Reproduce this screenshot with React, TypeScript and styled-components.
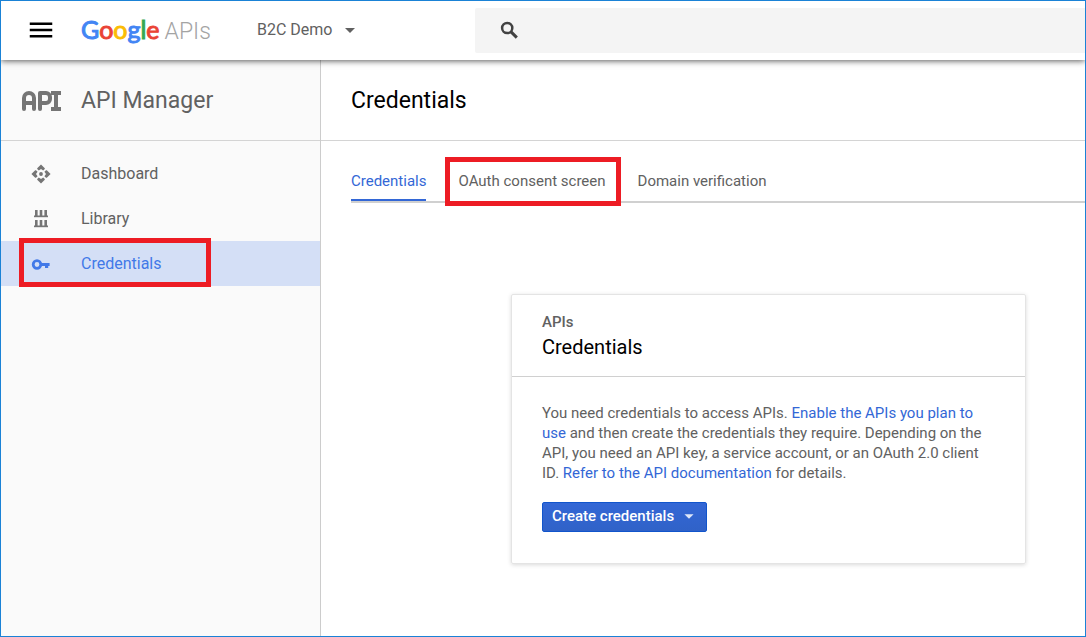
import React from "react";
import styled, { createGlobalStyle } from "styled-components";
import { MdMenu, MdArrowDropDown } from "react-icons/md";
import { TbApi } from "react-icons/tb";

const GlobalStyle = createGlobalStyle`
  *, *::before, *::after { box-sizing: border-box; }
  body { margin: 0; font-family: Roboto, "Liberation Sans", sans-serif; font-size: 15px; line-height: 20px; color: #616161; background: #fff; }
  h1, h2, p, ul { margin: 0; padding: 0; font-weight: 400; }
  ul { list-style: none; }
  a { color: #3367d6; text-decoration: none; }
  button { font: inherit; border: 0; padding: 0; background: none; cursor: pointer; }
  svg { display: block; flex: none; }
`;

const Page = styled.div`
  min-height: 100vh;
  display: flex;
  flex-direction: column;
  border: 1px solid #1a82d6;
`;

const TopBar = styled.header`
  position: relative;
  z-index: 1;
  display: flex;
  align-items: center;
  height: 59px;
  padding: 0 0 2px 25px;
  background: #fff;
  box-shadow: 0 1px 6px rgba(0, 0, 0, 0.65);
  clip-path: inset(0 0 -10px 0);
`;

const MenuButton = styled.button`
  width: 55px;
  color: #000;
`;

const Brand = styled.a`
  display: flex;
  align-items: baseline;
  gap: 5px;
  width: 176px;
  padding-top: 2px;
  line-height: 30px;
`;

const Wordmark = styled.span`
  font-family: Lato, Roboto, sans-serif;
  font-size: 25px;
  -webkit-text-stroke: 1px currentColor;
`;

const Letter = styled.span<{ $color: string }>`
  color: ${(p) => p.$color};
`;

const Suite = styled.span`
  color: #a4a4a4;
  font-size: 23px;
  font-weight: 300;
`;

const ProjectButton = styled.button`
  display: flex;
  align-items: center;
  gap: 6px;
  color: #616161;
  font-size: 16px;
`;

const Search = styled.label`
  flex: 1;
  align-self: flex-start;
  display: flex;
  align-items: center;
  gap: 12px;
  height: 45px;
  margin: 7px 0 0 113px;
  padding-left: 23px;
  color: #424242;
  background: #f4f4f4;
  border-radius: 2px 0 0 2px;
`;

const SearchInput = styled.input`
  flex: 1;
  min-width: 0;
  border: 0;
  outline: 0;
  font: inherit;
  background: transparent;
`;

const Body = styled.div`
  flex: 1;
  display: flex;
`;

const Sidebar = styled.nav`
  width: 320px;
  flex: none;
  background: #fafafa;
  border-right: 1px solid #ccc;
`;

const SectionHead = styled.div`
  display: flex;
  align-items: center;
  gap: 20px;
  height: 81px;
  padding: 1px 20px 0;
  border-bottom: 1px solid #d4d4d4;
  color: #616161;
  font-size: 23px;
  line-height: 32px;
`;

const NavList = styled.ul`
  padding-top: 10px;
`;

const NavItem = styled.li`
  position: relative;
`;

const NavLink = styled.a<{ $active?: boolean }>`
  display: flex;
  align-items: center;
  gap: 30px;
  height: 45px;
  padding-left: 30px;
  font-size: 16px;
  color: ${(p) => (p.$active ? "#4279e8" : "#616161")};
  background: ${(p) => (p.$active ? "#d4dff6" : "transparent")};
  svg { color: ${(p) => (p.$active ? "#4279e8" : "#757575")}; }
`;

const Highlight = styled.span<{ $left: number; $width: string }>`
  position: absolute;
  top: -3px;
  left: ${(p) => p.$left}px;
  width: ${(p) => p.$width};
  height: 49px;
  border: 5px solid #ed1c24;
  pointer-events: none;
`;

const Main = styled.main`
  flex: 1;
  min-width: 0;
`;

const PageHead = styled(SectionHead)`
  padding: 1px 30px 0;
  color: #000;
`;

const PageTitle = styled.h1`
  font-size: 23px;
`;

const Tabs = styled.div`
  display: flex;
  gap: 32px;
  height: 43px;
  margin: 19px 0 0 30px;
  border-bottom: 2px solid #d0d0d0;
`;

const Tab = styled.a<{ $active?: boolean }>`
  position: relative;
  display: flex;
  align-items: center;
  height: 41px;
  padding-top: 2px;
  color: ${(p) => (p.$active ? "#3367d6" : "#616161")};
  border-bottom: 2px solid ${(p) => (p.$active ? "#3367d6" : "transparent")};
`;

const Card = styled.section`
  margin: 91px 59px 72px 190px;
  border: 1px solid #e4e4e4;
  border-radius: 2px;
  box-shadow: 0 1px 4px rgba(0, 0, 0, 0.15);
`;

const CardHead = styled.header`
  padding: 17px 30px 15px;
  border-bottom: 1px solid #d0d0d0;
`;

const CardTitle = styled.h2`
  margin-top: 1px;
  color: #000;
  font-size: 20px;
  line-height: 28px;
`;

const Eyebrow = styled.p`
  font-weight: 500;
`;

const CardBody = styled.div`
  padding: 26px 30px 31px;
`;

const CreateButton = styled.button`
  display: flex;
  align-items: center;
  gap: 4px;
  height: 30px;
  margin-top: 19px;
  padding: 0 6px 2px 9px;
  color: #fff;
  font-weight: 500;
  border: 1px solid #1155cc;
  border-radius: 2px;
  background: linear-gradient(#3367d6, #3062c8);
  svg { color: #dfe7f8; }
`;

const SearchIcon = () => (
  <svg width="23" height="23" viewBox="0 0 23 23" fill="none" stroke="currentColor" aria-hidden="true">
    <circle cx="9.2" cy="9" r="5.1" strokeWidth="2.5" />
    <path d="M12.8 12.6L18.8 18.6" strokeWidth="3" />
  </svg>
);

const ApiIcon = () => (
  <svg width="40" height="20" viewBox="0 0 40 20" fill="#757575" aria-hidden="true">
    <TbApi x={-5} y={-14} width={48} height={48} size={48} strokeWidth={2} color="#757575" />
    <rect x="30" y="0" width="10" height="4" />
    <rect x="30" y="16" width="10" height="4" />
  </svg>
);

const DashboardIcon = () => (
  <svg width="20" height="20" viewBox="0 0 20 20" fill="currentColor" aria-hidden="true">
    <circle cx="10" cy="10" r="1.9" />
    {[0, 90, 180, 270].map((angle) => (
      <path key={angle} transform={`rotate(${angle} 10 10)`} d="M10 .4L13.8 4.2V5L12.2 6.6L10 5L7.8 6.6L6.2 5V4.2Z" />
    ))}
  </svg>
);

const LibraryIcon = () => (
  <svg width="20" height="20" viewBox="0 0 20 20" fill="currentColor" aria-hidden="true">
    {[1, 11].map((y) => (
      <g key={y}>
        <rect x="4" y={y} width="2.6" height="6" />
        <rect x="8.7" y={y} width="2.6" height="6" />
        <rect x="13.4" y={y} width="2.6" height="6" />
        <rect x="3" y={y + 5.5} width="14" height="1.7" />
      </g>
    ))}
  </svg>
);

const KeyIcon = () => (
  <svg width="20" height="20" viewBox="0 0 20 20" fill="none" stroke="currentColor" aria-hidden="true">
    <circle cx="6" cy="10.5" r="3.8" strokeWidth="2.8" />
    <path d="M10 10.5H18.6M15.6 10.5V14" strokeWidth="3.2" />
  </svg>
);

const wordmark: [string, string][] = [
  ["G", "#4285f4"],
  ["o", "#ea4335"],
  ["o", "#fbbc05"],
  ["g", "#4285f4"],
  ["l", "#34a853"],
  ["e", "#ea4335"],
];

export default function App() {
  return (
    <>
      <GlobalStyle />
      <Page>
        <TopBar>
          <MenuButton aria-label="Menu"><MdMenu size={30} /></MenuButton>
          <Brand href="#home">
            <Wordmark>
              {wordmark.map(([ch, color], i) => <Letter key={i} $color={color}>{ch}</Letter>)}
            </Wordmark>
            <Suite>APIs</Suite>
          </Brand>
          <ProjectButton>B2C Demo<MdArrowDropDown size={24} /></ProjectButton>
          <Search>
            <SearchIcon />
            <SearchInput type="search" aria-label="Search" />
          </Search>
        </TopBar>
        <Body>
          <Sidebar>
            <SectionHead><ApiIcon />API Manager</SectionHead>
            <NavList>
              <NavItem><NavLink href="#dashboard"><DashboardIcon />Dashboard</NavLink></NavItem>
              <NavItem><NavLink href="#library"><LibraryIcon />Library</NavLink></NavItem>
              <NavItem>
                <NavLink href="#credentials" $active><KeyIcon />Credentials</NavLink>
                <Highlight $left={18} $width="192px" />
              </NavItem>
            </NavList>
          </Sidebar>
          <Main>
            <PageHead><PageTitle>Credentials</PageTitle></PageHead>
            <Tabs>
              <Tab href="#credentials" $active>Credentials</Tab>
              <Tab href="#consent">OAuth consent screen<Highlight $left={-13} $width="calc(100% + 28px)" /></Tab>
              <Tab href="#domain">Domain verification</Tab>
            </Tabs>
            <Card>
              <CardHead>
                <Eyebrow>APIs</Eyebrow>
                <CardTitle>Credentials</CardTitle>
              </CardHead>
              <CardBody>
                <p>
                  You need credentials to access APIs. <a href="#enable">Enable the APIs you plan to use</a> and then
                  create the credentials they require. Depending on the API, you need an API key, a service account, or
                  an OAuth 2.0 client ID. <a href="#docs">Refer to the API documentation</a> for details.
                </p>
                <CreateButton>Create credentials<MdArrowDropDown size={22} /></CreateButton>
              </CardBody>
            </Card>
          </Main>
        </Body>
      </Page>
    </>
  );
}
